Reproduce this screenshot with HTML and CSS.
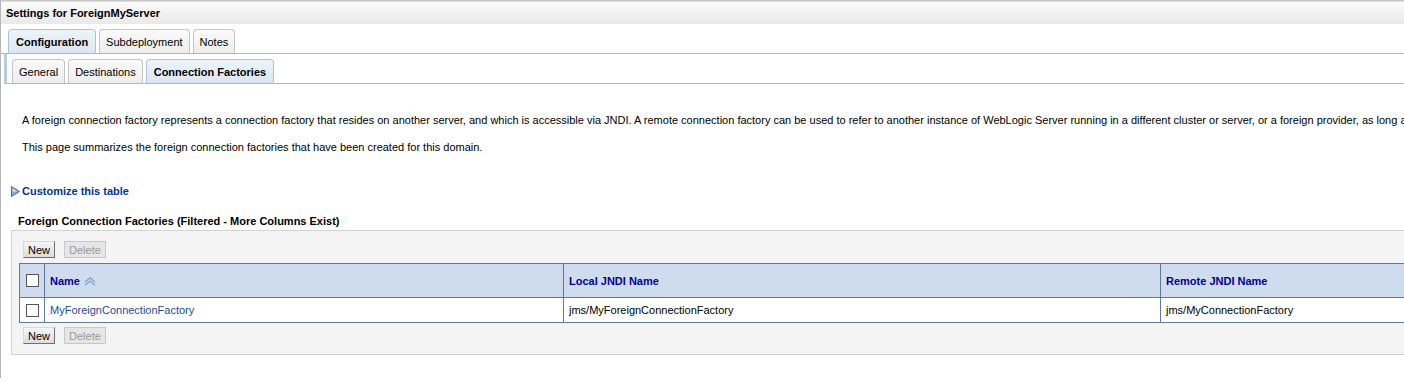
FILE: index.html
```html
<!DOCTYPE html>
<html lang="en">
<head>
    <meta charset="UTF-8" />
    <title>Settings for ForeignMyServer</title>
    <link rel="stylesheet" href="styles.css">
</head>
<body>
    <div class="page">
        <div class="titlebar">Settings for ForeignMyServer</div>

        <div class="tabs tabs-main">
            <a href="#" class="tab active">Configuration</a>
            <a href="#" class="tab">Subdeployment</a>
            <a href="#" class="tab">Notes</a>
        </div>
        <div class="subtabs-wrap">
            <div class="tabs tabs-sub">
                <a href="#" class="tab">General</a>
                <a href="#" class="tab">Destinations</a>
                <a href="#" class="tab active">Connection Factories</a>
            </div>
        </div>

        <div class="intro">
            <p class="long">A foreign connection factory represents a connection factory that resides on another server, and which is accessible via JNDI. A remote connection factory can be used to refer to another instance of WebLogic Server running in a different cluster or server, or a foreign provider, as long as that provider supports JNDI.</p>
            <p>This page summarizes the foreign connection factories that have been created for this domain.</p>
        </div>

        <a href="#" class="customize">
            <svg width="9" height="11" viewBox="0 0 9 11">
                <path d="M0.5 0.5 L8.5 5.5 L0.5 10.5 Z" fill="#8aa6d6" stroke="#4a6aa8" stroke-width="1"/>
                <path d="M1.5 2.3 L6 5.5 L1.5 5.5 Z" fill="#d6e2f5"/>
            </svg>
            Customize this table
        </a>

        <h2 class="table-title">Foreign Connection Factories (Filtered - More Columns Exist)</h2>

        <div class="table-panel">
            <div class="btn-row">
                <button class="btn">New</button>
                <button class="btn" disabled>Delete</button>
            </div>
            <table class="grid">
                <thead>
                    <tr>
                        <th class="col-check"><span class="checkbox"></span></th>
                        <th class="col-name">Name
                            <svg class="sort" width="12" height="9" viewBox="0 0 12 9">
                                <path d="M1 5 L6 0.8 L11 5 M1 8.2 L6 4 L11 8.2" fill="none" stroke="#7f9ec8" stroke-width="1.2"/>
                            </svg>
                        </th>
                        <th class="col-local">Local JNDI Name</th>
                        <th>Remote JNDI Name</th>
                    </tr>
                </thead>
                <tbody>
                    <tr>
                        <td class="col-check"><span class="checkbox"></span></td>
                        <td><a href="#" class="row-link">MyForeignConnectionFactory</a></td>
                        <td>jms/MyForeignConnectionFactory</td>
                        <td>jms/MyConnectionFactory</td>
                    </tr>
                </tbody>
            </table>
            <div class="btn-row bottom">
                <button class="btn">New</button>
                <button class="btn" disabled>Delete</button>
            </div>
        </div>
    </div>
</body>
</html>
```

FILE: styles.css
```css
* {
    margin: 0;
    padding: 0;
    box-sizing: border-box;
}

body {
    font-family: 'Liberation Sans', Arial, sans-serif;
    font-size: 11px;
    color: #000;
    background: #fff;
    overflow: hidden;
}

.page {
    width: 1430px;
    height: 378px;
    border-left: 1px solid #b5b5b5;
    border-top: 1px solid #c9c9c9;
    box-shadow: 0 2px 2px #8c8c8c;
    background: #fff;
}

.titlebar {
    height: 23px;
    line-height: 22px;
    padding-left: 5px;
    font-weight: bold;
    background: linear-gradient(#fbfbfb, #e9e9e9);
    border-top: 1px solid #dcdcdc;
}

.tabs {
    display: flex;
    gap: 3px;
}

.tabs-main {
    margin-top: 5px;
    padding-left: 7px;
    border-bottom: 1px solid #9ebcd6;
}

.tab {
    display: block;
    height: 24px;
    line-height: 24px;
    padding: 0 6px;
    color: #000;
    text-decoration: none;
    background: linear-gradient(#fbfbfb, #ededed);
    border: 1px solid #c4c4c4;
    border-bottom: none;
    border-radius: 4px 4px 0 0;
}

.tab.active {
    font-weight: bold;
    padding: 0 7px;
    background: linear-gradient(#eef4fa, #d9e6f2);
    border-color: #a9c4dc;
}

.subtabs-wrap {
    margin-left: 3px;
    border-left: 3px solid #b5cde3;
    border-bottom: 1px solid #9ebcd6;
    padding-top: 5px;
}

.tabs-sub {
    padding-left: 5px;
}

.intro {
    padding: 29px 0 0 21px;
}

.intro p {
    line-height: 14px;
    margin-bottom: 13px;
    white-space: nowrap;
}

.customize {
    display: flex;
    align-items: center;
    gap: 2px;
    margin: 31px 0 0 10px;
    color: #003399;
    font-weight: bold;
    text-decoration: none;
}

.table-title {
    font-size: 11px;
    margin: 17px 0 0 17px;
    line-height: 14px;
}

.table-panel {
    margin: 2px 0 0 10px;
    padding: 10px 0 10px 7px;
    background: #f4f4f4;
    border: 1px solid #d3d3d3;
}

.btn-row {
    display: flex;
    gap: 9px;
    padding-left: 4px;
    margin-bottom: 5px;
}

.btn-row.bottom {
    margin: 4px 0 0;
}

.btn {
    font-family: 'Liberation Sans', Arial, sans-serif;
    font-size: 11px;
    height: 17px;
    padding: 0 4px;
    background: linear-gradient(#f6f6f6, #dcdcdc);
    border: 1px solid;
    border-color: #d8d8d8 #6e6e6e #6e6e6e #d8d8d8;
    color: #000;
}

.btn:disabled {
    color: #9a9a9a;
    background: #e6e6e6;
    border-color: #c8c8c8;
}

.grid {
    width: 1420px;
    border-collapse: collapse;
    table-layout: fixed;
    background: #fff;
}

.grid th,
.grid td {
    border: 1px solid #5f7a9c;
    text-align: left;
    padding: 0 5px;
    white-space: nowrap;
}

.grid th {
    height: 34px;
    background: #cfdcef;
    color: #000099;
    font-weight: bold;
}

.grid td {
    height: 25px;
}

.col-check {
    width: 25px;
}

.grid th.col-check,
.grid td.col-check {
    padding: 0 0 0 6px;
}

.col-name {
    width: 519px;
}

.col-local {
    width: 597px;
}

.checkbox {
    display: block;
    width: 13px;
    height: 13px;
    border: 1px solid #555;
    background: #fff;
}

.sort {
    vertical-align: -1px;
    margin-left: 1px;
}

.row-link {
    color: #1c4c9c;
    text-decoration: none;
}
```
